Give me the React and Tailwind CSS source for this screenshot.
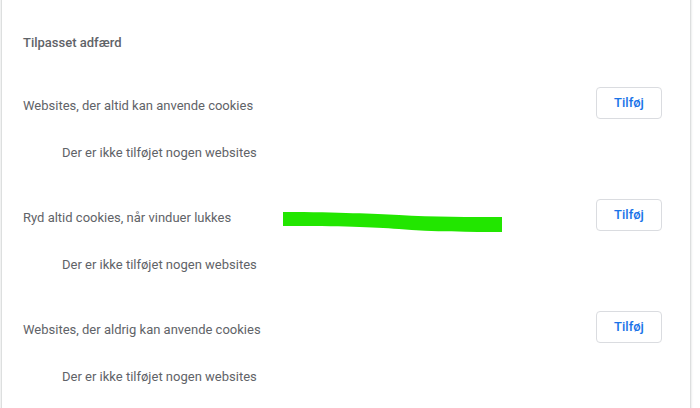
export default function App() {
  const rows = [
    { label: "Websites, der altid kan anvende cookies", gap: "mt-[27px]" },
    { label: "Ryd altid cookies, når vinduer lukkes", gap: "mt-[14px]", mark: true },
    { label: "Websites, der aldrig kan anvende cookies", gap: "mt-[14px]" },
  ];
  return (
    <div
      className="w-[700px] h-[408px] overflow-hidden bg-white"
      style={{ fontFamily: "Roboto, 'Liberation Sans', sans-serif" }}
    >
      <div className="ml-[2px] w-[688px] h-[430px] -mt-[10px] bg-white rounded-[4px] shadow-[0_1px_2px_rgba(60,64,67,0.3),0_1px_3px_1px_rgba(60,64,67,0.15)] pt-[43px] pl-[21px] pr-[28px]">
        <div className="h-[20px] leading-[20px] text-[13px] font-medium text-[#5f6368]">
          Tilpasset adfærd
        </div>
        {rows.map((r, i) => (
          <div key={i} className={r.gap}>
            <div className="relative h-[48px] flex items-start justify-between">
              <div className="mt-[16px] leading-[20px] text-[13px] text-[#5f6368]">{r.label}</div>
              {r.mark && (
                <svg
                  className="absolute left-[259px] top-[19px]"
                  width="222"
                  height="22"
                  viewBox="0 0 222 22"
                >
                  <path
                    d="M1 1 C60 1 90 3 117 4 C150 6 190 6 220 6 L220 21 C190 21 150 21 117 18 C90 16 60 15 1 15 Z"
                    fill="#22e600"
                  />
                </svg>
              )}
              <button className="mt-[7px] w-[66px] h-[32px] rounded-[4px] border border-[#dadce0] bg-white text-[13px] font-medium text-[#1a73e8]">
                Tilføj
              </button>
            </div>
            <div className="h-[50px] flex items-center pl-[39px] text-[13px] text-[#5f6368]">
              Der er ikke tilføjet nogen websites
            </div>
          </div>
        ))}
      </div>
    </div>
  );
}
